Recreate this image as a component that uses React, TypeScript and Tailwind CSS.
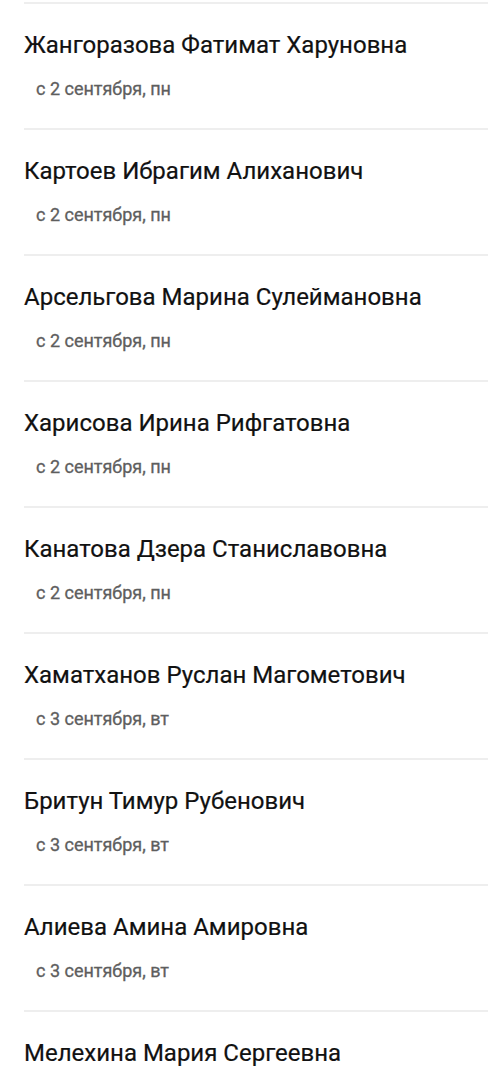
const people = [
  { name: 'Жангоразова Фатимат Харуновна', date: 'с 2 сентября, пн' },
  { name: 'Картоев Ибрагим Алиханович', date: 'с 2 сентября, пн' },
  { name: 'Арсельгова Марина Сулеймановна', date: 'с 2 сентября, пн' },
  { name: 'Харисова Ирина Рифгатовна', date: 'с 2 сентября, пн' },
  { name: 'Канатова Дзера Станиславовна', date: 'с 2 сентября, пн' },
  { name: 'Хаматханов Руслан Магометович', date: 'с 3 сентября, вт' },
  { name: 'Бритун Тимур Рубенович', date: 'с 3 сентября, вт' },
  { name: 'Алиева Амина Амировна', date: 'с 3 сентября, вт' },
  // the last row is cut by the bottom of the screen, its date is not visible
  { name: 'Мелехина Мария Сергеевна', date: '' },
];

export default function App() {
  return (
    <div className="h-[1085px] overflow-hidden bg-white pt-[2px] font-['Roboto',sans-serif]">
      {people.map((p, i) => (
        <div key={i} className="ml-6 h-[126px] border-t-2 border-[#eeeeee]">
          <div className="mt-[25px] text-[24px] leading-8 text-[#111111] [-webkit-text-stroke:0.2px_#111111]">
            {p.name}
          </div>
          {p.date && (
            <div className="ml-3 mt-[16px] text-[18px] leading-6 text-[#5e5e5e] [-webkit-text-stroke:0.3px_#5e5e5e]">
              {p.date}
            </div>
          )}
        </div>
      ))}
    </div>
  );
}
